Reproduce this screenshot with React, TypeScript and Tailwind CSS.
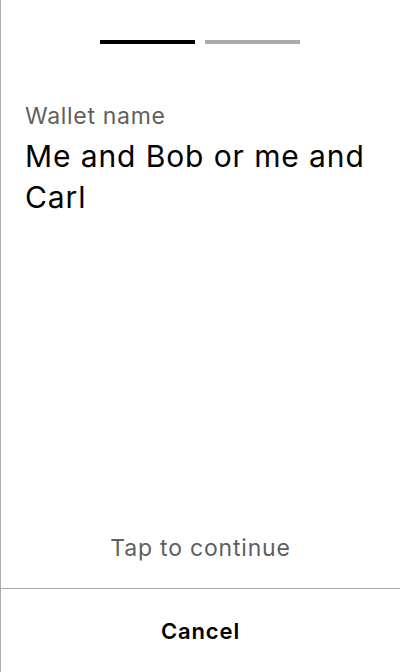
import { FC } from "react";

const App: FC = () => {
  return (
    <div
      className="flex flex-col h-[672px] w-[400px] bg-white border-l border-[#aaaaaa] tracking-[0.03em]"
      style={{ fontFamily: "Inter, 'Noto Sans', sans-serif" }}
    >
      {/* STEP INDICATOR */}
      <div className="flex justify-center gap-[10px] pt-[40px] pr-px">
        <div className="w-[95px] h-[4px] bg-black" />
        <div className="w-[95px] h-[4px] bg-[#aaaaaa]" />
      </div>

      {/* WALLET NAME */}
      <div className="flex-grow pl-[24px] pr-6 pt-[57px]">
        <p className="text-[23px] leading-[30px] text-[#5f5f5f] tracking-[0.03em]">Wallet name</p>
        <p className="text-[30px] leading-[41px] text-black mt-[5px] tracking-[0.03em]">
          Me and Bob or me and Carl
        </p>
      </div>

      <p className="text-center text-[23px] leading-[30px] text-[#5f5f5f] pb-[25px] tracking-[0.035em]">
        Tap to continue
      </p>

      {/* ACTIONS */}
      <div className="border-t border-[#aaaaaa] h-[84px] pt-[2px] flex items-center justify-center">
        <span className="text-[22px] font-semibold text-black tracking-[0.04em]">Cancel</span>
      </div>
    </div>
  );
};
export default App;
